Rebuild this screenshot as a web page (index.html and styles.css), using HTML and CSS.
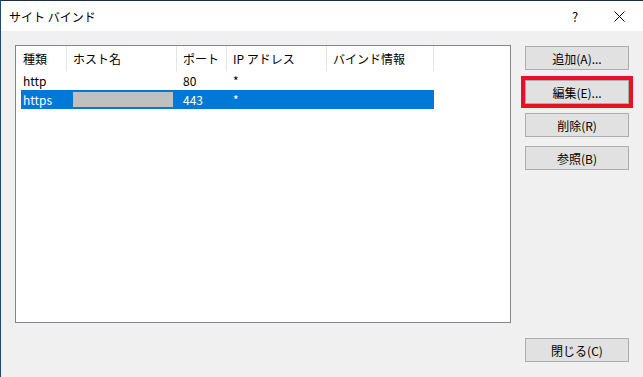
FILE: index.html
```html
<!DOCTYPE html>
<html lang="ja">
<head>
    <meta charset="utf-8">
    <title>サイト バインド</title>
    <link rel="stylesheet" href="styles.css">
</head>
<body>
    <div class="window">
        <div class="titlebar">
            <span class="title">サイト バインド</span>
            <span class="help">?</span>
            <span class="close">
                <svg width="11" height="11" viewBox="0 0 11 11"><path d="M0.5 0.5 L10.5 10.5 M10.5 0.5 L0.5 10.5" stroke="#000" stroke-width="1" fill="none"/></svg>
            </span>
        </div>
        <div class="content">
            <div class="listbox">
                <div class="header">
                    <div class="col c1">種類</div>
                    <div class="col c2">ホスト名</div>
                    <div class="col c3">ポート</div>
                    <div class="col c4">IP アドレス</div>
                    <div class="col c5">バインド情報</div>
                </div>
                <div class="row">
                    <div class="col c1">http</div>
                    <div class="col c2"></div>
                    <div class="col c3">80</div>
                    <div class="col c4">*</div>
                    <div class="col c5"></div>
                </div>
                <div class="row selected">
                    <div class="col c1">https</div>
                    <div class="col c2"><span class="masked"></span></div>
                    <div class="col c3">443</div>
                    <div class="col c4">*</div>
                    <div class="col c5"></div>
                </div>
            </div>
            <div class="buttons">
                <button class="btn">追加(A)...</button>
                <button class="btn marked">編集(E)...</button>
                <button class="btn">削除(R)</button>
                <button class="btn">参照(B)</button>
                <button class="btn bottom">閉じる(C)</button>
            </div>
        </div>
    </div>
</body>
</html>
```
FILE: styles.css
```css
* {
    box-sizing: border-box;
}
body {
    margin: 0;
    font-family: "Noto Sans CJK JP", "Noto Sans", sans-serif;
    font-size: 12px;
    color: #000;
    background: #1d4a6e;
}
.window {
    width: 643px;
    height: 377px;
    margin-left: 1px;
    border-top: 1px solid #1b2f44;
    background: #f0f0f0;
    display: flex;
    flex-direction: column;
}
.titlebar {
    height: 30px;
    background: #fff;
    display: flex;
    align-items: center;
    padding-left: 8px;
}
.title {
    flex: 1;
}
.help {
    width: 46px;
    text-align: center;
    font-size: 13px;
}
.close {
    width: 46px;
    display: flex;
    justify-content: center;
    padding-right: 4px;
}
.content {
    flex: 1;
    display: flex;
    padding: 14px 0 15px 14px;
}
.listbox {
    width: 496px;
    height: 278px;
    background: #fff;
    border: 1px solid #828790;
}
.header {
    display: flex;
    height: 25px;
    align-items: stretch;
}
.header .col {
    border-right: 1px solid #e5e5e5;
    display: flex;
    align-items: center;
    padding-left: 6px;
}
.header .c1 {
    padding-left: 7px;
}
.c1 { width: 51px; }
.c2 { width: 110px; }
.c3 { width: 50px; }
.c4 { width: 100px; }
.c5 { width: 107px; }
.row {
    display: flex;
    height: 19px;
    align-items: center;
    margin-left: 5px;
    width: 413px;
}
.row .col {
    padding-left: 6px;
}
.row .c1 {
    width: 46px;
    padding-left: 2px;
}
.selected {
    background: #0078d7;
    color: #fff;
}
.masked {
    display: block;
    width: 100px;
    height: 15px;
    background: #c0c0c0;
}
.buttons {
    display: flex;
    flex-direction: column;
    margin-left: 14px;
    padding-top: 1px;
}
.btn {
    width: 104px;
    height: 24px;
    margin-bottom: 9px;
    padding: 0;
    font: inherit;
    color: #000;
    background: #e1e1e1;
    border: 1px solid #adadad;
}
.marked {
    margin-top: 1px;
    outline: 4px solid #e81123;
}
.bottom {
    margin-top: auto;
    margin-bottom: 0;
}
```
